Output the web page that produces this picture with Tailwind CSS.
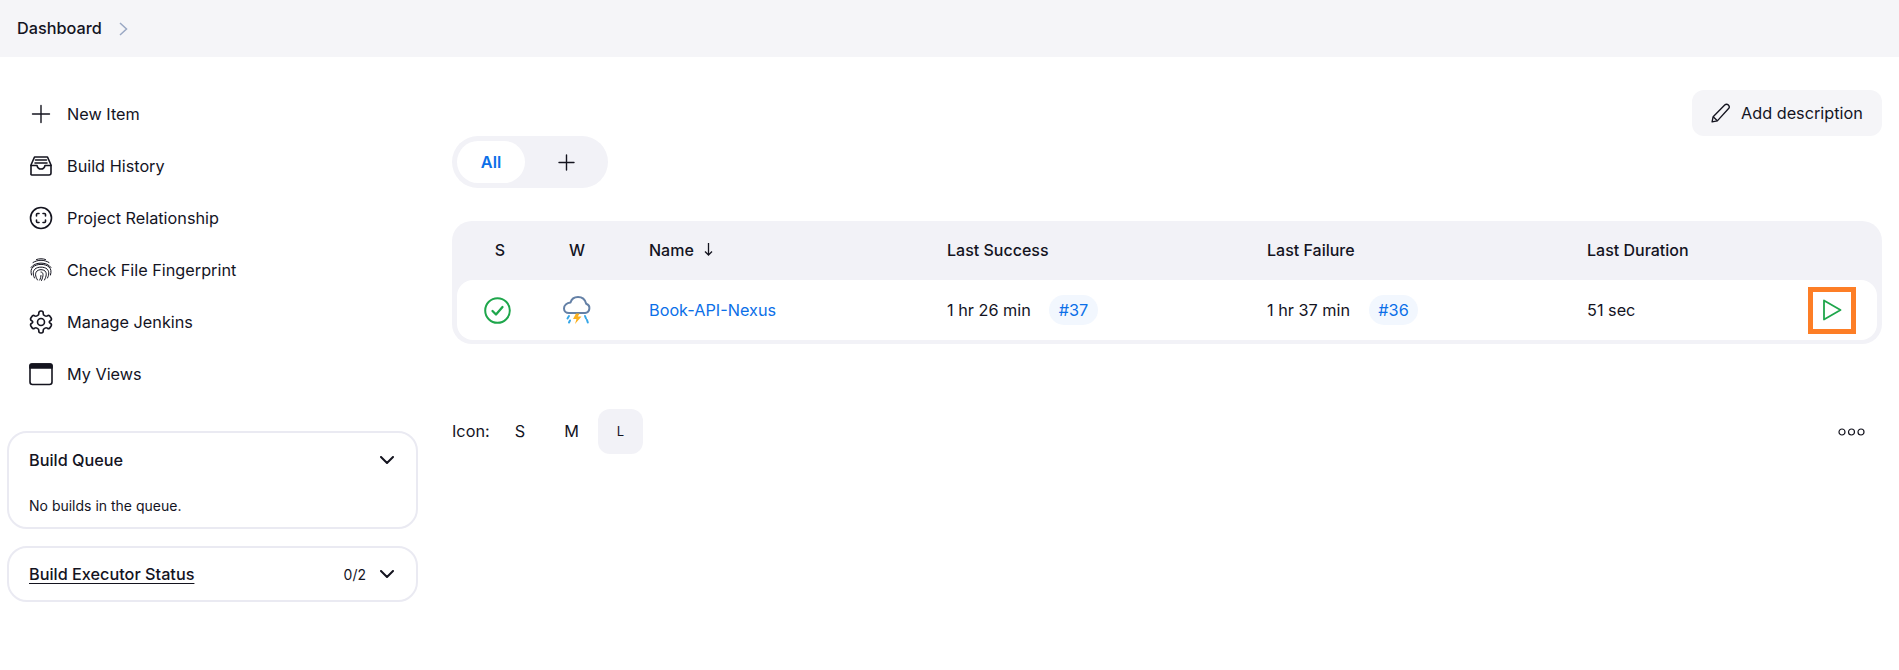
<!DOCTYPE html>
<html lang="en">
<head>
    <meta charset="UTF-8">
    <title>Dashboard - Jenkins</title>
    <script src="https://cdn.jsdelivr.net/npm/@tailwindcss/browser@4"></script>
</head>
<body class="bg-white text-[#14141f] font-['Inter',sans-serif] text-[16.250px] min-h-screen">
    <!-- breadcrumb -->
    <div class="h-[57px] bg-[#f5f5f8] flex items-center pl-[17px] gap-[17px]">
        <span class="font-medium text-[#14141f]">Dashboard</span>
        <svg class="w-[9px] h-[14px] text-[#9aa8c4]" viewBox="0 0 9 14" fill="none" stroke="currentColor" stroke-width="1.5"><path d="M1 1l6.5 6L1 13"/></svg>
    </div>

    <div class="flex">
        <!-- sidebar -->
        <div class="w-[452px] shrink-0 pl-[7px] pr-[34px] pt-[31px]">
            <div class="flex flex-col">
                <a class="h-[52px] flex items-center gap-[14px] pl-[22px]">
                    <svg class="w-6 h-6" viewBox="0 0 24 24" fill="none" stroke="currentColor" stroke-width="1.4" stroke-linecap="round"><path d="M12 3.500v17M3.500 12h17"/></svg>
                    <span class="pt-[1px]">New Item</span>
                </a>
                <a class="h-[52px] flex items-center gap-[14px] pl-[22px]">
                    <svg class="w-6 h-6" viewBox="0 0 24 24" fill="none" stroke="currentColor" stroke-width="1.6" stroke-linejoin="round" stroke-linecap="round"><path d="M5.500 3h13l3.500 8v8a2 2 0 0 1-2 2H3a1 1 0 0 1-1-1.500V11z"/><path d="M2 11.500h6c.5 2.500 2 3.500 4 3.500s3.500-1 4-3.500h6"/><path d="M6.500 6h11M6 9h12"/></svg>
                    <span class="pt-[1px]">Build History</span>
                </a>
                <a class="h-[52px] flex items-center gap-[14px] pl-[22px]">
                    <svg class="w-6 h-6" viewBox="0 0 24 24" fill="none" stroke="currentColor" stroke-width="1.6" stroke-linecap="round" stroke-linejoin="round"><circle cx="12" cy="12" r="10.500"/><path d="M7.500 10V8.500a1 1 0 0 1 1-1H10M14 7.500h1.500a1 1 0 0 1 1 1V10M16.500 14v1.500a1 1 0 0 1-1 1H14M10 16.500H8.500a1 1 0 0 1-1-1V14"/></svg>
                    <span class="pt-[1px]">Project Relationship</span>
                </a>
                <a class="h-[52px] flex items-center gap-[14px] pl-[22px]">
                    <svg class="w-6 h-6" viewBox="0 0 24 24" fill="none" stroke="currentColor" stroke-width="1" stroke-linecap="round"><path d="M7.500 1.500c3-1 6-1 9 0"/><path d="M4 4.500c5-3 11-3 16 0"/><path d="M2 9.500c4-6 16-6 20 0"/><path d="M2.500 17c-1-4-.5-6 1.500-8 4-3.500 12-3.500 16 0 2 2 2.500 4 1.500 8"/><path d="M5.500 20c-2-4-1.500-7 .5-9 3-2.500 9-2.500 12 0 2 2 2.500 5 .5 9"/><path d="M8.500 22c-2.500-4-2.500-7-.5-9 2-1.800 6-1.800 8 0 2 2 1.500 5-.5 9"/><path d="M12 14c2.500 0 2.800 3.500.5 8.500M12 17.500c0 1.500-.5 3-1.200 4.500"/></svg>
                    <span class="pt-[1px]">Check File Fingerprint</span>
                </a>
                <a class="h-[52px] flex items-center gap-[14px] pl-[22px]">
                    <svg class="w-6 h-6" viewBox="0 0 24 24" fill="none" stroke="currentColor" stroke-width="1.6" stroke-linecap="round" stroke-linejoin="round"><path d="M12.220 1h-.44a2 2 0 0 0-2 2v.68a2 2 0 0 1-1 1.730l-.9.520a2 2 0 0 1-2 0l-.3-.15a2 2 0 0 0-2.730.730L1.900 8a2 2 0 0 0 .730 2.730l.15.100a2 2 0 0 1 1 1.170 2 2 0 0 1-1 1.170l-.15.090a2 2 0 0 0-.730 2.730l.95 1.500a2 2 0 0 0 2.730.730l.3-.15a2 2 0 0 1 2 0l.9.520a2 2 0 0 1 1 1.730V21a2 2 0 0 0 2 2h.44a2 2 0 0 0 2-2v-.68a2 2 0 0 1 1-1.730l.9-.520a2 2 0 0 1 2 0l.3.15a2 2 0 0 0 2.730-.730l.95-1.500a2 2 0 0 0-.730-2.730l-.15-.090a2 2 0 0 1-1-1.170 2 2 0 0 1 1-1.170l.15-.100A2 2 0 0 0 22.100 8l-.95-1.500a2 2 0 0 0-2.730-.730l-.3.15a2 2 0 0 1-2 0l-.9-.520a2 2 0 0 1-1-1.730V3a2 2 0 0 0-2-2z"/><circle cx="12" cy="12" r="3.500"/></svg>
                    <span class="pt-[1px]">Manage Jenkins</span>
                </a>
                <a class="h-[52px] flex items-center gap-[14px] pl-[22px]">
                    <svg class="w-6 h-6" viewBox="0 0 24 24" fill="none" stroke="currentColor" stroke-width="1.6" stroke-linejoin="round"><rect x="1" y="2" width="22" height="20.500" rx="2.500"/><path d="M1 3.500a1.500 1.500 0 0 1 1.500-1.500h19a1.500 1.500 0 0 1 1.500 1.500V6H1z" fill="currentColor"/></svg>
                    <span class="pt-[1px]">My Views</span>
                </a>
            </div>

            <div class="mt-[31px] h-[98px] border-2 border-[#eaeaf2] rounded-[20px] pl-[20px] pr-[22px]">
                <div class="flex items-center justify-between h-[54px]">
                    <span class="font-medium">Build Queue</span>
                    <svg class="w-[14px] h-[8px]" viewBox="0 0 14 8" fill="none" stroke="currentColor" stroke-width="2" stroke-linecap="round" stroke-linejoin="round"><path d="M1 1l6 6 6-6"/></svg>
                </div>
                <p class="text-[14px] mt-[8px]">No builds in the queue.</p>
            </div>

            <div class="mt-[17px] h-[56px] border-2 border-[#eaeaf2] rounded-[20px] pl-[20px] pr-[22px] flex items-center">
                <span class="font-medium underline underline-offset-[3px]">Build Executor Status</span>
                <span class="ml-auto text-[14px]">0/2</span>
                <svg class="ml-[14px] w-[14px] h-[8px]" viewBox="0 0 14 8" fill="none" stroke="currentColor" stroke-width="2" stroke-linecap="round" stroke-linejoin="round"><path d="M1 1l6 6 6-6"/></svg>
            </div>
        </div>

        <!-- main -->
        <div class="flex-1 pr-[17px] pt-[33px]">
            <div class="flex justify-end">
                <button class="h-[46px] w-[190px] bg-[#f5f5f8] rounded-[12px] flex items-center pl-[18px] gap-[10px]">
                    <svg class="w-[21px] h-[21px]" viewBox="0 0 20 20" fill="none" stroke="currentColor" stroke-width="1.300" stroke-linejoin="round"><path d="M2 18l1-5L14 2c1-1 2.500-1 3.500 0s1 2.500 0 3.500L7 17z"/><path d="M3 13l4 4"/></svg>
                    <span>Add description</span>
                </button>
            </div>

            <div class="w-[156px] h-[52px] rounded-full bg-[#f2f2f7] p-[5px] flex items-center">
                <span class="w-[68px] h-[42px] rounded-full bg-white flex items-center justify-center font-semibold text-[#0b6fe8]">All</span>
                <span class="flex-1 flex items-center justify-center pl-[4px]">
                    <svg class="w-[17px] h-[17px]" viewBox="0 0 17 17" fill="none" stroke="currentColor" stroke-width="1.400" stroke-linecap="round"><path d="M8.500 1v15M1 8.500h15"/></svg>
                </span>
            </div>

            <div class="mt-[33px] rounded-[20px] bg-[#f2f2f7] px-[5px] pb-[4px]">
                <div class="grid grid-cols-[86px_68px_336px_320px_320px_1fr] h-[59px] pb-[2px] items-center font-medium text-[16px]">
                    <span class="text-center">S</span>
                    <span class="text-center">W</span>
                    <span class="flex items-center gap-[10px] pl-[38px]">Name <svg class="w-[9px] h-[13px]" viewBox="0 0 9 13" fill="none" stroke="currentColor" stroke-width="1.300"><path d="M4.500 0v12M1 8.500l3.500 3.500L8 8.500"/></svg></span>
                    <span>Last Success</span>
                    <span>Last Failure</span>
                    <span>Last Duration</span>
                </div>
                <div class="grid grid-cols-[86px_68px_336px_320px_320px_1fr] h-[60px] items-center bg-white rounded-[16px]">
                    <span class="flex justify-center pr-[6px]">
                        <svg class="w-[27px] h-[27px] text-[#1ea64b]" viewBox="0 0 27 27" fill="none" stroke="currentColor" stroke-width="2" stroke-linecap="round" stroke-linejoin="round"><circle cx="13.500" cy="13.500" r="12.300"/><path d="M8.500 14l3.500 3.500 6.500-7.500" stroke-width="2.300"/></svg>
                    </span>
                    <span class="flex justify-center">
                        <svg class="w-[28px] h-[28px]" viewBox="0 0 28 28" fill="none" stroke-linecap="round" stroke-linejoin="round"><path d="M6 17h16a4.800 4.800 0 0 0 1.200-9.300C22 3.200 18.500 1 15 1 11.500 1 8.500 3 7.500 6.500 3.800 7 1 9.500 1 12.500 1 15 3 17 6 17z" stroke="#6480a6" stroke-width="2"/><path d="M13 17.500l-3 5.500h3.500l-1.500 5 6.500-7.500h-3.800l2-3z" fill="#fbb11f"/><path d="M6 20l-1.500 2.500M7 24.500l-1 2M22 20l1 2.500M24 24l.8 2.500" stroke="#37a7e8" stroke-width="2"/></svg>
                    </span>
                    <a class="text-[#0b6fe8] pl-[38px]">Book-API-Nexus</a>
                    <span class="flex items-center"><span class="w-[102px]">1 hr 26 min</span><a class="h-[30px] w-[49px] justify-center rounded-full bg-[#f2f7fe] text-[#0b6fe8] flex items-center">#37</a></span>
                    <span class="flex items-center"><span class="w-[102px]">1 hr 37 min</span><a class="h-[30px] w-[49px] justify-center rounded-full bg-[#f2f7fe] text-[#0b6fe8] flex items-center">#36</a></span>
                    <span class="flex items-center justify-between pr-[21px]">51 sec
                        <span class="w-[48px] h-[47px] border-[5px] border-[#fd7e26] flex items-center justify-center">
                            <svg class="w-[20px] h-[22px] text-[#1ea64b]" viewBox="0 0 20 22" fill="none" stroke="currentColor" stroke-width="1.800" stroke-linejoin="round"><path d="M2 1.500L18.500 11 2 20.500z"/></svg>
                        </span>
                    </span>
                </div>
            </div>

            <div class="mt-[65px] h-[45px] flex items-center">
                <span class="w-[54px]">Icon:</span>
                <span class="w-[36px] text-center ml-[-4px]">S</span>
                <span class="w-[45px] text-center ml-[11px]">M</span>
                <span class="w-[45px] h-[45px] ml-[4px] rounded-[12px] bg-[#f2f2f7] flex items-center justify-center text-[13px]">L</span>
                <svg class="ml-auto mr-[17px] w-[27px] h-[8px]" viewBox="0 0 27 8" fill="none" stroke="currentColor" stroke-width="1.200"><circle cx="4" cy="4" r="3"/><circle cx="13.500" cy="4" r="3"/><circle cx="23" cy="4" r="3"/></svg>
            </div>
        </div>
    </div>
</body>
</html>
